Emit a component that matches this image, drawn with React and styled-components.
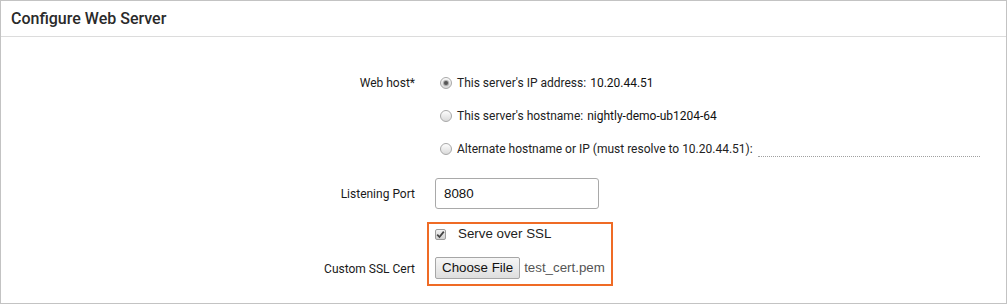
import React from 'react';
import styled, { createGlobalStyle } from 'styled-components';

const GlobalStyle = createGlobalStyle`
  html, body {
    margin: 0;
    padding: 0;
    background: #fff;
  }
  body {
    font-family: Roboto, "Liberation Sans", Arial, sans-serif;
    color: #222;
  }
`;

// 面板
const Panel = styled.div`
  box-sizing: border-box;
  width: 1007px;
  height: 304px;
  border: 1px solid #c3c3c3;
  background: #fff;
`;

const PanelHeader = styled.div`
  box-sizing: border-box;
  height: 36px;
  padding: 0 10px;
  display: flex;
  align-items: center;
  border-bottom: 1px solid #dcdcdc;
  font-size: 16px;
  font-weight: 500;
  color: #2a2a2a;
`;

const Form = styled.div`
  display: grid;
  grid-template-columns: 414px 1fr;
  column-gap: 20px;
  padding-top: 30px;
  font-size: 12px;
  line-height: 14px;
`;

const Label = styled.div`
  box-sizing: border-box;
  height: ${p => p.h || 32}px;
  display: flex;
  align-items: ${p => (p.bottom ? 'flex-end' : 'center')};
  justify-content: flex-end;
  padding-top: ${p => p.pt || 0}px;
  padding-bottom: ${p => (p.bottom ? '10px' : '0')};
  color: #1a1a1a;
`;

const Controls = styled.div`
  display: flex;
  flex-direction: column;
`;

const OptionRow = styled.label`
  height: ${p => p.h || 32}px;
  display: flex;
  align-items: center;
  color: #222;
  white-space: nowrap;
`;

const Radio = styled.span`
  box-sizing: border-box;
  width: 12px;
  height: 12px;
  margin: 0 5px 0 5px;
  border-radius: 50%;
  border: 1px solid #a8a8a8;
  background: linear-gradient(#fdfdfd, #dadada);
  display: flex;
  align-items: center;
  justify-content: center;
  flex-shrink: 0;

  &::after {
    content: '';
    width: 4px;
    height: 4px;
    border-radius: 50%;
    background: ${p => (p.checked ? '#555' : 'transparent')};
    box-shadow: ${p => (p.checked ? '0 0 1px 1px rgba(90,90,90,0.5)' : 'none')};
  }
`;

const Value = styled.span`
  margin-left: 4px;
  color: #111;
`;

const DottedInput = styled.span`
  display: inline-block;
  width: 222px;
  height: 14px;
  margin-left: 5px;
  border-bottom: 1px dotted #a0a0a0;
  align-self: center;
  transform: translateY(1px);
`;

const PortRow = styled.div`
  padding-top: 13px;
  display: flex;
  align-items: center;
`;

const TextInput = styled.div`
  box-sizing: border-box;
  width: 164px;
  height: 31px;
  border: 1px solid #a9a9a9;
  border-radius: 3px;
  padding: 0 8px;
  display: flex;
  align-items: center;
  font-family: "Liberation Sans", Arial, sans-serif;
  font-size: 13.33px;
  color: #111;
`;

// 高亮框
const Highlight = styled.div`
  box-sizing: border-box;
  width: 186px;
  height: 64px;
  margin: 13px 0 0 -8px;
  border: 2px solid #ef6b25;
  padding: 1px 0 0 6px;
  display: flex;
  flex-direction: column;
  font-family: "Liberation Sans", Arial, sans-serif;
  font-size: 13.33px;
  line-height: 16px;
`;

const CheckRow = styled.label`
  height: 18px;
  display: flex;
  align-items: center;
  color: #222;
`;

const CheckBox = styled.span`
  box-sizing: border-box;
  width: 11px;
  height: 11px;
  margin: 0 12px 0 0;
  border: 1px solid #9c9c9c;
  border-radius: 2px;
  background: linear-gradient(#f2f2f2, #d0d0d0);
  display: flex;
  align-items: center;
  justify-content: center;
`;

const FileRow = styled.div`
  margin-top: 14px;
  display: flex;
  align-items: center;
  gap: 4px;
  color: #555;
`;

const FileButton = styled.span`
  box-sizing: border-box;
  height: 22px;
  padding: 0 6px;
  display: flex;
  align-items: center;
  border: 1px solid #a6a6a6;
  border-radius: 2px;
  background: linear-gradient(#f6f6f6, #dedede);
  color: #111;
`;

const Check = () => (
  <svg width="9" height="9" viewBox="0 0 9 9">
    <path d="M1.2 4.6 L3.5 7 L7.8 1.6" fill="none" stroke="#444" strokeWidth="1.8" />
  </svg>
);

export default function App() {
  return (
    <>
      <GlobalStyle />
      <Panel>
        <PanelHeader>Configure Web Server</PanelHeader>
        <Form>
          <Label>Web host*</Label>
          <Controls>
            <OptionRow>
              <Radio checked />
              This server's IP address:<Value>10.20.44.51</Value>
            </OptionRow>
            <OptionRow h={33}>
              <Radio />
              This server's hostname:<Value>nightly-demo-ub1204-64</Value>
            </OptionRow>
            <OptionRow h={33}>
              <Radio />
              Alternate hostname or IP (must resolve to 10.20.44.51):
              <DottedInput />
            </OptionRow>
          </Controls>

          <Label h={44} pt={13}>Listening Port</Label>
          <PortRow>
            <TextInput>8080</TextInput>
          </PortRow>

          <Label h={77} bottom>Custom SSL Cert</Label>
          <Controls>
            <Highlight>
              <CheckRow>
                <CheckBox>
                  <Check />
                </CheckBox>
                Serve over SSL
              </CheckRow>
              <FileRow>
                <FileButton>Choose File</FileButton>
                test_cert.pem
              </FileRow>
            </Highlight>
          </Controls>
        </Form>
      </Panel>
    </>
  );
}
